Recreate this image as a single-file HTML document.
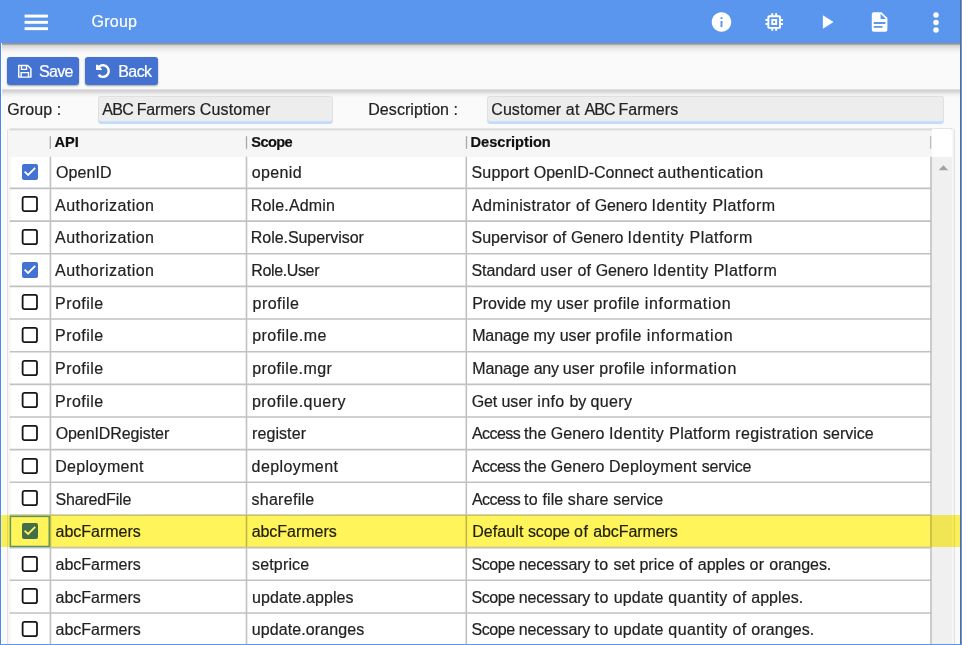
<!DOCTYPE html>
<html><head><meta charset="utf-8"><title>Group</title>
<style>
html,body{margin:0;padding:0;width:962px;height:645px;overflow:hidden}
body{width:962px;height:645px;overflow:hidden;position:relative;background:#fafafa;font-family:"Liberation Sans",sans-serif;font-size:16px;color:#222}
.abs{position:absolute}
.t{position:absolute;white-space:nowrap;line-height:20px;height:20px;-webkit-text-stroke:.2px currentColor}
#hdr{left:0;top:0;width:962px;height:43.2px;background:#5a95ee}
#hsh{left:0;top:43.2px;width:962px;height:12px;background:linear-gradient(rgba(0,0,0,.4) 0,rgba(0,0,0,.42) 1.1px,rgba(0,0,0,.2) 2.0px,rgba(0,0,0,.15) 2.7px,rgba(0,0,0,.09) 4.8px,rgba(0,0,0,.05) 6.8px,rgba(0,0,0,.02) 8.8px,rgba(0,0,0,0) 11px)}
#tb{left:0;top:43.3px;width:962px;height:46.5px;background:#fafafa}
#tsh{left:0;top:89.0px;width:962px;height:9px;background:linear-gradient(rgba(0,0,0,.03) 0,rgba(0,0,0,.17) .9px,rgba(0,0,0,.17) 1.4px,rgba(0,0,0,.12) 3.1px,rgba(0,0,0,.06) 5px,rgba(0,0,0,.02) 6.9px,rgba(0,0,0,0) 8.8px)}
.btn{background:#4472d0;border-radius:3px;height:27.8px;top:57.2px;box-shadow:0 1px 2px rgba(0,0,0,.35)}
.btn .t{color:#fff}
.inp{background:#ececec;border:1px solid #e0e0e0;border-bottom:none;box-shadow:inset 0 -2.8px 0 #c1dbfa;background-color:#ededed;border-radius:3px;box-sizing:border-box;top:95.9px;height:28.1px}
#tbl{left:7.2px;top:128px;width:947.8px;height:530px;background:#f6f6f6;border:1.4px solid #e1e1e1;border-top-color:#f0f0f0;border-radius:3.5px;box-sizing:border-box}
.cb{width:16px;height:16px;left:21.9px;box-sizing:border-box;border-radius:2px}
.cb.off{border:1.8px solid #161616;background:#fff;border-radius:2.6px;width:16.2px;left:21.7px}
.cb.on{background:#4472d0}
.b{font-weight:bold;font-size:14.6px;color:#111}
#wrap{position:absolute;left:0;top:0;width:962px;height:645px;overflow:hidden}
</style></head><body><div id="wrap">

<div id="tb" class="abs"></div>
<div id="hdr" class="abs"></div><div id="hsh" class="abs"></div><div id="tsh" class="abs"></div>
<svg class="abs" style="left:0;top:0" width="962" height="44" viewBox="0 0 962 44">
<g fill="#fff">
<rect x="24.6" y="14.6" width="23.3" height="2.95"/>
<rect x="24.6" y="20.85" width="23.3" height="2.95"/>
<rect x="24.6" y="27.2" width="23.3" height="2.95"/>
<g transform="translate(709.80,10.30) scale(0.975)"><path d="M12 2C6.48 2 2 6.48 2 12s4.48 10 10 10 10-4.48 10-10S17.52 2 12 2zm1 15h-2v-6h2v6zm0-8h-2V7h2v2z" /></g>
<g transform="translate(762.50,10.30) scale(0.975)"><path d="M15 9H9v6h6V9zm-2 4h-2v-2h2v2zm8-2V9h-2V7c0-1.1-.9-2-2-2h-2V3h-2v2h-2V3H9v2H7c-1.1 0-2 .9-2 2v2H3v2h2v2H3v2h2v2c0 1.1.9 2 2 2h2v2h2v-2h2v2h2v-2h2c1.1 0 2-.9 2-2v-2h2v-2h-2v-2h2zm-4 6H7V7h10v10z" /></g>
<g transform="translate(815.10,10.30) scale(0.975)"><path d="M8 5v14l11-7z" /></g>
<g transform="translate(867.90,10.30) scale(0.975)"><path d="M13 9h5.5L13 3.5V9M6 2h8l6 6v12a2 2 0 0 1-2 2H6a2 2 0 0 1-2-2V4c0-1.1.9-2 2-2m9 16v-2H6v2h9m3-4v-2H6v2h12z" /></g>
<circle cx="936" cy="15" r="2.75"/>
<circle cx="936" cy="22.5" r="2.75"/>
<circle cx="936" cy="30" r="2.75"/>
</g></svg>
<span class="t " style="left:91.5px;top:12.3px;color:#fff;letter-spacing:.25px">Group</span>
<div class="abs btn" style="left:7px;width:72px"></div>
<div class="abs btn" style="left:84.9px;width:72.8px"></div>
<svg class="abs" style="left:0;top:50px" width="170" height="40" viewBox="0 50 170 40" fill="none" stroke="#fff">
<path d="M18.7 65.5h8.9l3.3 3.3v8.3h-12.2z" stroke-width="1.45" stroke-linejoin="round"/>
<path d="M21.5 65.7v3.7h5v-3.7" stroke-width="1.35"/>
<path d="M21.1 76.9v-4.3h7.4v4.3" stroke-width="1.35"/>
<path d="M99.15 66.67A5.8 5.8 0 1 1 98.52 74.9" stroke-width="2.45"/>
<path d="M96.0 64.8L96.0 70.0L101.9 70.0L101.9 69.0L97.6 64.8z" fill="#fff" stroke="none"/>
</svg>
<span class="t " style="left:39px;top:62.4px;color:#fff;letter-spacing:-.7px">Save</span>
<span class="t " style="left:118.2px;top:62.2px;color:#fff;letter-spacing:-.55px">Back</span>
<span class="t " style="left:7.2px;top:100.1px;letter-spacing:.1px">Group :</span>
<div class="abs inp" style="left:98px;width:234.5px"></div>
<span class="t" style="margin-left:0.03px;left:102.3px;top:99.7px"><span class="w2" style="letter-spacing:-0.751px">ABC </span><span class="w2" style="letter-spacing:-0.105px">Farmers </span><span class="w2" style="letter-spacing:0.155px">Customer</span></span>
<span class="t " style="left:368.2px;top:100.1px;letter-spacing:.08px">Description :</span>
<div class="abs inp" style="left:487px;width:456.5px"></div>
<span class="t" style="margin-left:-0.25px;left:491.5px;top:99.7px"><span class="w2" style="letter-spacing:0.072px">Customer </span><span class="w2" style="letter-spacing:0.319px">at </span><span class="w2" style="letter-spacing:-0.855px">ABC </span><span class="w2" style="letter-spacing:0.036px">Farmers</span></span>
<div class="abs" style="left:1.15px;top:43.3px;width:1px;height:602px;background:#fff"></div>
<div id="tbl" class="abs"></div>
<div class="abs" style="left:10px;top:127.7px;width:942px;height:3.6px;background:linear-gradient(rgba(0,0,0,0) 0,rgba(0,0,0,.115) 1.1px,rgba(0,0,0,.115) 1.5px,rgba(0,0,0,.06) 2.3px,rgba(0,0,0,0) 3.5px)"></div>
<div class="abs" style="left:9.2px;top:156.66px;width:922.3px;height:500px;background:linear-gradient(to right,#f5f5f5,#fff 3px)"></div>
<div class="abs" style="left:931.5px;top:129.4px;width:20.7px;height:27.26px;background:#fff;border-top-right-radius:2px"></div>
<div class="abs" style="left:932.2px;top:156.66px;width:20px;height:500px;background:#f0f0f0"></div>
<svg class="abs" style="left:0;top:0" width="962" height="645" viewBox="0 0 962 645">
<g stroke="#c1c1c1" stroke-width="1.6" fill="none">
<path d="M9.7 188.42H931.5"/>
<path d="M9.7 221.08H931.5"/>
<path d="M9.7 253.73H931.5"/>
<path d="M9.7 286.39H931.5"/>
<path d="M9.7 319.04H931.5"/>
<path d="M9.7 351.70H931.5"/>
<path d="M9.7 384.36H931.5"/>
<path d="M9.7 417.01H931.5"/>
<path d="M9.7 449.67H931.5"/>
<path d="M9.7 482.32H931.5"/>
<path d="M9.7 514.98H931.5"/>
<path d="M9.7 547.64H931.5"/>
<path d="M9.7 580.29H931.5"/>
<path d="M9.7 612.95H931.5"/>
<path d="M50.45 156.76V645"/>
<path d="M246.5 156.76V645"/>
<path d="M466.3 156.76V645"/>
<path d="M931.0 156.76V645"/>
</g>
<g stroke="#a8a8a8" stroke-width="1.3">
<path d="M50.3 136.2V148.8"/>
<path d="M246.5 136.2V148.8"/>
<path d="M466.5 136.2V148.8"/>
<path d="M930.6 136.2V148.8" stroke="#bdbdbd"/>
</g>
<path d="M938.6 170.3L943.45 165.2L948.3 170.3z" fill="#a3a3a3"/>
</svg>
<span class="t b" style="left:54.5px;top:132.0px">API</span>
<span class="t b" style="left:251.3px;top:132.0px;letter-spacing:-.62px">Scope</span>
<span class="t b" style="left:470.5px;top:132.0px">Description</span>
<div class="abs cb on" style="top:163.64px"></div>
<svg class="abs" style="left:21.9px;top:163.64px" width="16" height="16" viewBox="0 0 16 16"><path d="M2.6 7.7L6.1 11.0L13.2 3.9" fill="none" stroke="#fff" stroke-width="1.8"/></svg>
<span class="t " style="letter-spacing:0.100px;margin-left:0.45px;left:55.5px;top:162.99px">OpenID</span>
<span class="t " style="letter-spacing:0.360px;margin-left:0.20px;left:251.5px;top:162.99px">openid</span>
<span class="t" style="margin-left:-0.07px;left:471.5px;top:162.99px"><span class="w" style="letter-spacing:0.231px">Support </span><span class="w" style="letter-spacing:-0.032px">OpenID-Connect </span><span class="w" style="letter-spacing:0.446px">authentication</span></span>
<svg class="abs" style="left:20px;top:194.30px" width="20" height="20" viewBox="0 0 20 20"><rect x="2.62" y="2.9" width="14.36" height="14.2" rx="1.9" fill="#fff" stroke="#161616" stroke-width="1.8"/></svg>
<span class="t " style="letter-spacing:0.458px;margin-left:-0.45px;left:55.5px;top:195.65px">Authorization</span>
<span class="t " style="letter-spacing:0.144px;margin-left:-0.65px;left:251.5px;top:195.65px">Role.Admin</span>
<span class="t" style="margin-left:0.43px;left:471.5px;top:195.65px"><span class="w" style="letter-spacing:0.376px">Administrator </span><span class="w" style="letter-spacing:0.388px">of </span><span class="w" style="letter-spacing:-0.180px">Genero </span><span class="w" style="letter-spacing:0.552px">Identity </span><span class="w" style="letter-spacing:0.431px">Platform</span></span>
<svg class="abs" style="left:20px;top:226.95px" width="20" height="20" viewBox="0 0 20 20"><rect x="2.62" y="2.9" width="14.36" height="14.2" rx="1.9" fill="#fff" stroke="#161616" stroke-width="1.8"/></svg>
<span class="t " style="letter-spacing:0.458px;margin-left:-0.45px;left:55.5px;top:228.30px">Authorization</span>
<span class="t " style="letter-spacing:-0.057px;margin-left:-0.70px;left:251.5px;top:228.30px">Role.Supervisor</span>
<span class="t" style="margin-left:-0.07px;left:471.5px;top:228.30px"><span class="w" style="letter-spacing:0.026px">Supervisor </span><span class="w" style="letter-spacing:0.212px">of </span><span class="w" style="letter-spacing:-0.207px">Genero </span><span class="w" style="letter-spacing:0.674px">Identity </span><span class="w" style="letter-spacing:0.445px">Platform</span></span>
<div class="abs cb on" style="top:261.61px"></div>
<svg class="abs" style="left:21.9px;top:261.61px" width="16" height="16" viewBox="0 0 16 16"><path d="M2.6 7.7L6.1 11.0L13.2 3.9" fill="none" stroke="#fff" stroke-width="1.8"/></svg>
<span class="t " style="letter-spacing:0.458px;margin-left:-0.45px;left:55.5px;top:260.96px">Authorization</span>
<span class="t " style="letter-spacing:-0.362px;margin-left:-0.25px;left:251.5px;top:260.96px">Role.User</span>
<span class="t" style="margin-left:-0.07px;left:471.5px;top:260.96px"><span class="w" style="letter-spacing:-0.073px">Standard </span><span class="w" style="letter-spacing:0.328px">user </span><span class="w" style="letter-spacing:0.179px">of </span><span class="w" style="letter-spacing:-0.121px">Genero </span><span class="w" style="letter-spacing:0.552px">Identity </span><span class="w" style="letter-spacing:0.502px">Platform</span></span>
<svg class="abs" style="left:20px;top:292.27px" width="20" height="20" viewBox="0 0 20 20"><rect x="2.62" y="2.9" width="14.36" height="14.2" rx="1.9" fill="#fff" stroke="#161616" stroke-width="1.8"/></svg>
<span class="t " style="letter-spacing:0.458px;margin-left:-0.47px;left:55.5px;top:293.62px">Profile</span>
<span class="t " style="letter-spacing:0.450px;margin-left:1.05px;left:251.5px;top:293.62px">profile</span>
<span class="t" style="margin-left:0.68px;left:471.5px;top:293.62px"><span class="w" style="letter-spacing:-0.040px">Provide </span><span class="w" style="letter-spacing:0.105px">my </span><span class="w" style="letter-spacing:0.240px">user </span><span class="w" style="letter-spacing:0.412px">profile </span><span class="w" style="letter-spacing:0.679px">information</span></span>
<svg class="abs" style="left:20px;top:324.92px" width="20" height="20" viewBox="0 0 20 20"><rect x="2.62" y="2.9" width="14.36" height="14.2" rx="1.9" fill="#fff" stroke="#161616" stroke-width="1.8"/></svg>
<span class="t " style="letter-spacing:0.458px;margin-left:-0.47px;left:55.5px;top:326.27px">Profile</span>
<span class="t " style="letter-spacing:0.444px;margin-left:0.70px;left:251.5px;top:326.27px">profile.me</span>
<span class="t" style="margin-left:0.68px;left:471.5px;top:326.27px"><span class="w" style="letter-spacing:-0.131px">Manage </span><span class="w" style="letter-spacing:0.107px">my </span><span class="w" style="letter-spacing:0.058px">user </span><span class="w" style="letter-spacing:0.387px">profile </span><span class="w" style="letter-spacing:0.689px">information</span></span>
<svg class="abs" style="left:20px;top:357.58px" width="20" height="20" viewBox="0 0 20 20"><rect x="2.62" y="2.9" width="14.36" height="14.2" rx="1.9" fill="#fff" stroke="#161616" stroke-width="1.8"/></svg>
<span class="t " style="letter-spacing:0.458px;margin-left:-0.47px;left:55.5px;top:358.93px">Profile</span>
<span class="t " style="letter-spacing:0.400px;margin-left:0.70px;left:251.5px;top:358.93px">profile.mgr</span>
<span class="t" style="margin-left:0.68px;left:471.5px;top:358.93px"><span class="w" style="letter-spacing:-0.110px">Manage </span><span class="w" style="letter-spacing:-0.283px">any </span><span class="w" style="letter-spacing:0.160px">user </span><span class="w" style="letter-spacing:0.374px">profile </span><span class="w" style="letter-spacing:0.699px">information</span></span>
<svg class="abs" style="left:20px;top:390.23px" width="20" height="20" viewBox="0 0 20 20"><rect x="2.62" y="2.9" width="14.36" height="14.2" rx="1.9" fill="#fff" stroke="#161616" stroke-width="1.8"/></svg>
<span class="t " style="letter-spacing:0.458px;margin-left:-0.47px;left:55.5px;top:391.58px">Profile</span>
<span class="t " style="letter-spacing:0.458px;margin-left:0.45px;left:251.5px;top:391.58px">profile.query</span>
<span class="t" style="margin-left:0.35px;left:471.5px;top:391.58px"><span class="w" style="letter-spacing:-0.168px">Get </span><span class="w" style="letter-spacing:0.037px">user </span><span class="w" style="letter-spacing:0.401px">info </span><span class="w" style="letter-spacing:-0.082px">by </span><span class="w" style="letter-spacing:0.366px">query</span></span>
<svg class="abs" style="left:20px;top:422.89px" width="20" height="20" viewBox="0 0 20 20"><rect x="2.62" y="2.9" width="14.36" height="14.2" rx="1.9" fill="#fff" stroke="#161616" stroke-width="1.8"/></svg>
<span class="t " style="letter-spacing:-0.085px;margin-left:0.15px;left:55.5px;top:424.24px">OpenIDRegister</span>
<span class="t " style="letter-spacing:0.086px;margin-left:0.50px;left:251.5px;top:424.24px">register</span>
<span class="t" style="margin-left:0.43px;left:471.5px;top:424.24px"><span class="w" style="letter-spacing:-0.561px">Access </span><span class="w" style="letter-spacing:0.012px">the </span><span class="w" style="letter-spacing:0.050px">Genero </span><span class="w" style="letter-spacing:0.474px">Identity </span><span class="w" style="letter-spacing:0.232px">Platform </span><span class="w" style="letter-spacing:0.317px">registration </span><span class="w" style="letter-spacing:-0.023px">service</span></span>
<svg class="abs" style="left:20px;top:455.55px" width="20" height="20" viewBox="0 0 20 20"><rect x="2.62" y="2.9" width="14.36" height="14.2" rx="1.9" fill="#fff" stroke="#161616" stroke-width="1.8"/></svg>
<span class="t " style="letter-spacing:0.328px;margin-left:-0.38px;left:55.5px;top:456.90px">Deployment</span>
<span class="t " style="letter-spacing:0.400px;margin-left:0.10px;left:251.5px;top:456.90px">deployment</span>
<span class="t" style="margin-left:0.43px;left:471.5px;top:456.90px"><span class="w" style="letter-spacing:-0.561px">Access </span><span class="w" style="letter-spacing:0.012px">the </span><span class="w" style="letter-spacing:0.060px">Genero </span><span class="w" style="letter-spacing:0.256px">Deployment </span><span class="w" style="letter-spacing:-0.139px">service</span></span>
<svg class="abs" style="left:20px;top:488.20px" width="20" height="20" viewBox="0 0 20 20"><rect x="2.62" y="2.9" width="14.36" height="14.2" rx="1.9" fill="#fff" stroke="#161616" stroke-width="1.8"/></svg>
<span class="t " style="letter-spacing:-0.167px;margin-left:-0.05px;left:55.5px;top:489.55px">SharedFile</span>
<span class="t " style="letter-spacing:0.288px;margin-left:-0.05px;left:251.5px;top:489.55px">sharefile</span>
<span class="t" style="margin-left:0.43px;left:471.5px;top:489.55px"><span class="w" style="letter-spacing:-0.561px">Access </span><span class="w" style="letter-spacing:0.235px">to </span><span class="w" style="letter-spacing:0.072px">file </span><span class="w" style="letter-spacing:0.170px">share </span><span class="w" style="letter-spacing:-0.123px">service</span></span>
<div class="abs cb on" style="top:522.86px"></div>
<svg class="abs" style="left:21.9px;top:522.86px" width="16" height="16" viewBox="0 0 16 16"><path d="M2.6 7.7L6.1 11.0L13.2 3.9" fill="none" stroke="#fff" stroke-width="1.8"/></svg>
<span class="t " style="letter-spacing:-0.022px;margin-left:0.10px;left:55.5px;top:522.21px">abcFarmers</span>
<span class="t " style="letter-spacing:-0.033px;margin-left:0.15px;left:251.5px;top:522.21px">abcFarmers</span>
<span class="t" style="margin-left:0.68px;left:471.5px;top:522.21px"><span class="w" style="letter-spacing:0.089px">Default </span><span class="w" style="letter-spacing:-0.178px">scope </span><span class="w" style="letter-spacing:0.429px">of </span><span class="w" style="letter-spacing:-0.087px">abcFarmers</span></span>
<svg class="abs" style="left:20px;top:553.51px" width="20" height="20" viewBox="0 0 20 20"><rect x="2.62" y="2.9" width="14.36" height="14.2" rx="1.9" fill="#fff" stroke="#161616" stroke-width="1.8"/></svg>
<span class="t " style="letter-spacing:-0.022px;margin-left:0.10px;left:55.5px;top:554.86px">abcFarmers</span>
<span class="t " style="letter-spacing:0.157px;margin-left:0.55px;left:251.5px;top:554.86px">setprice</span>
<span class="t" style="margin-left:-0.07px;left:471.5px;top:554.86px"><span class="w" style="letter-spacing:-0.428px">Scope </span><span class="w" style="letter-spacing:-0.157px">necessary </span><span class="w" style="letter-spacing:0.364px">to </span><span class="w" style="letter-spacing:0.047px">set </span><span class="w" style="letter-spacing:0.090px">price </span><span class="w" style="letter-spacing:0.293px">of </span><span class="w" style="letter-spacing:0.018px">apples </span><span class="w" style="letter-spacing:0.399px">or </span><span class="w" style="letter-spacing:-0.044px">oranges.</span></span>
<svg class="abs" style="left:20px;top:586.17px" width="20" height="20" viewBox="0 0 20 20"><rect x="2.62" y="2.9" width="14.36" height="14.2" rx="1.9" fill="#fff" stroke="#161616" stroke-width="1.8"/></svg>
<span class="t " style="letter-spacing:-0.022px;margin-left:0.10px;left:55.5px;top:587.52px">abcFarmers</span>
<span class="t " style="letter-spacing:0.083px;margin-left:0.50px;left:251.5px;top:587.52px">update.apples</span>
<span class="t" style="margin-left:-0.07px;left:471.5px;top:587.52px"><span class="w" style="letter-spacing:-0.428px">Scope </span><span class="w" style="letter-spacing:-0.157px">necessary </span><span class="w" style="letter-spacing:0.463px">to </span><span class="w" style="letter-spacing:0.177px">update </span><span class="w" style="letter-spacing:0.419px">quantity </span><span class="w" style="letter-spacing:0.267px">of </span><span class="w" style="letter-spacing:0.069px">apples.</span></span>
<svg class="abs" style="left:20px;top:618.83px" width="20" height="20" viewBox="0 0 20 20"><rect x="2.62" y="2.9" width="14.36" height="14.2" rx="1.9" fill="#fff" stroke="#161616" stroke-width="1.8"/></svg>
<span class="t " style="letter-spacing:-0.022px;margin-left:0.10px;left:55.5px;top:620.18px">abcFarmers</span>
<span class="t " style="letter-spacing:0.108px;margin-left:0.20px;left:251.5px;top:620.18px">update.oranges</span>
<span class="t" style="margin-left:-0.07px;left:471.5px;top:620.18px"><span class="w" style="letter-spacing:-0.428px">Scope </span><span class="w" style="letter-spacing:-0.157px">necessary </span><span class="w" style="letter-spacing:0.463px">to </span><span class="w" style="letter-spacing:0.177px">update </span><span class="w" style="letter-spacing:0.419px">quantity </span><span class="w" style="letter-spacing:0.267px">of </span><span class="w" style="letter-spacing:0.117px">oranges.</span></span>
<svg class="abs" style="left:0;top:514.98px" width="60" height="34" viewBox="0 0 60 34"><rect x="10.4" y="1.45" width="38.8" height="29.96" fill="none" stroke="#5f9bf0" stroke-width="1.4"/></svg>
<div class="abs" style="left:1px;top:514.58px;width:959px;height:32.16px;background:#fff45a;mix-blend-mode:multiply"></div>
<div class="abs" style="left:0;top:43.3px;width:1.15px;height:602px;background:#4a89ec"></div>
<div class="abs" style="left:960.6px;top:0;width:1.4px;height:645px;background:#5a95ee"></div>
<div class="abs" style="left:959.9px;top:0;width:.8px;height:645px;background:#6b6b6b"></div>
<div class="abs" style="left:0;top:643.8px;width:962px;height:1.2px;background:#5a95ee"></div>
</div></body></html>
